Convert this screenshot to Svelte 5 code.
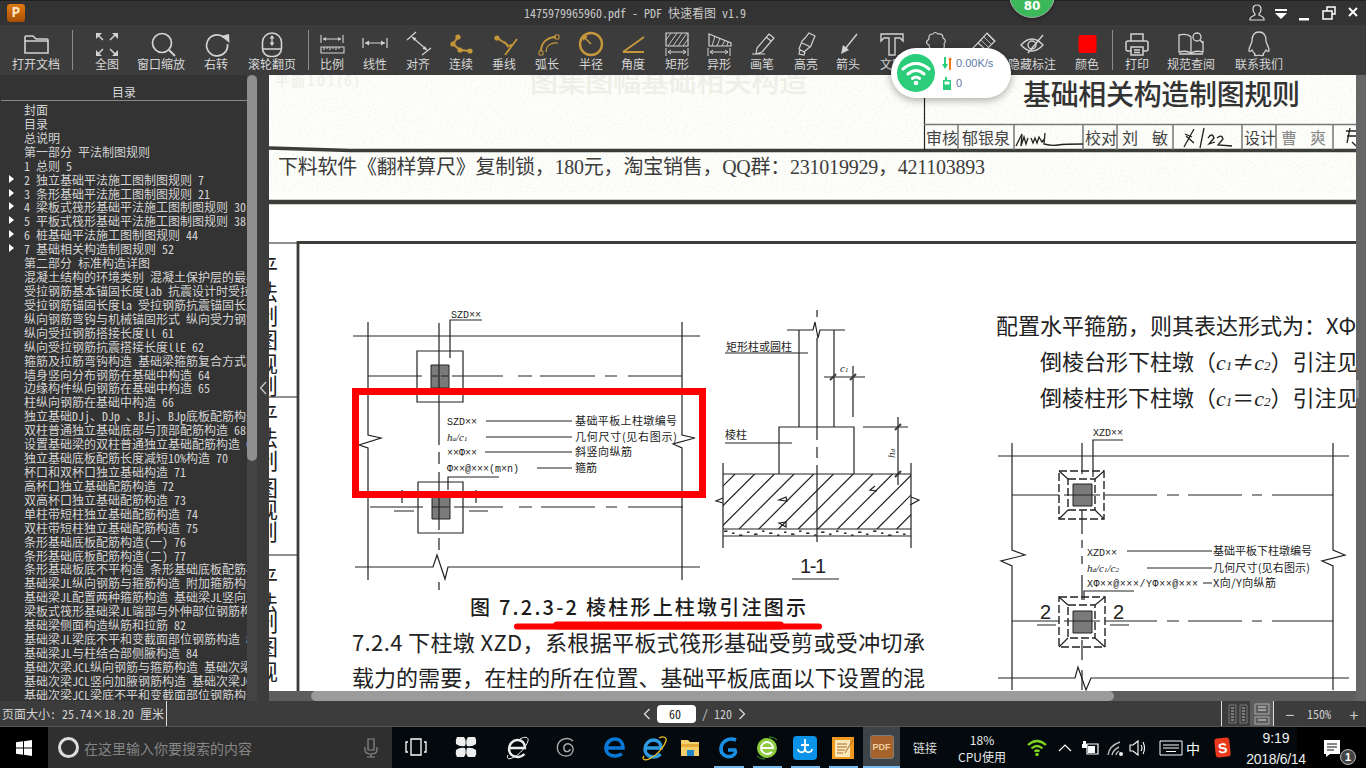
<script>
  const S = (d, sw = 1.4, stroke = 'currentColor') => ({ d, fill: 'none', stroke, sw });
  const F = (d, fill = 'currentColor') => ({ d, fill, stroke: 'none', sw: 0 });
  const dot = (x, y, r) => `M${x - r} ${y}a${r} ${r} 0 1 0 ${2 * r} 0a${r} ${r} 0 1 0 ${-2 * r} 0z`;
  const place = (items, start = 0) => {
    let end = start;
    return items.map((it) => {
      const w = it.w ?? 36;
      const ml = it.c - w / 2 - end;
      end = it.c + w / 2;
      return { ...it, w, ml };
    });
  };

  const dim = 'M7 18v8M29 18v8M9 22h18M12 20l-3 2 3 2M24 20l3 2-3 2';
  const tools = place([
    { c: 36, w: 48, t: '打开文档', i: [S('M7 23V7q0-1 1-1h7l3 3h11q1 0 1 1v13zM7 11h23', 1.6)] },
    { c: 72.5, w: 1, sep: 1 },
    { c: 107, t: '全图', i: [S('M9 5l5 5M21 10l5-5M9 24l5-5M26 24l-5-5', 1.5), F('M7 3h6l-6 6zM29 3h-6l6 6zM7 26h6l-6-6zM29 26h-6l6-6z')] },
    { c: 161, w: 48, t: '窗口缩放', i: [S(dot(19, 13, 9.5), 1.7), S('M26 20l6 6', 2)] },
    { c: 216, t: '右转', i: [S('M26 7.500A10.500 10.500 0 1 0 29.500 14', 1.7), F('M23 6l8-2 .5 9z')] },
    { c: 272, w: 48, t: '滚轮翻页', i: [S('M8.500 12.500a9.500 9.500 0 0 1 19 0v6a8 8 0 0 1-8 8h-3a8 8 0 0 1-8-8zM8.500 19h19', 1.6), S('M18 6v9', 1.4), F('M15.500 8.500L18 5l2.500 3.500zM15.500 12.500L18 16l2.500-3.500z')] },
    { c: 308.5, w: 1, sep: 1 },
    { c: 332, t: '比例', i: [S('M7 5v8M29 5v8M9 9h18M7 17h23v6H7zM10 17v3M13 17v2M16 17v3M19 17v2M22 17v3M25 17v2', 1.1), F('M9 9l3-2v4zM27 9l-3-2v4z')] },
    { c: 375, t: '线性', i: [S('M6 8v10M30 8v10M8 13h20', 1.2), F('M8 13l4-2.500v5zM28 13l-4-2.500v5z')] },
    { c: 418, t: '对齐', i: [S('M7 10l9-8M22 25l9-7M12 7l15 13', 1.2), F('M12 7l4.500 1-2.500 3zM27 20l-4.500-1 2.500-3z')] },
    { c: 461, t: '连续', gold: 1, i: [S('M15 7L10 14l7 6 10 1', 2), F(dot(15, 7, 2.6)), F(dot(10, 14, 2.6)), F(dot(17, 20, 2.6)), F(dot(27, 21, 2.6))] },
    { c: 504, t: '垂线', gold: 1, i: [S('M11 8l11 7M31 9L19 25M18.500 11.500l3.500 5 4-2', 1.8), F(dot(11, 8, 2.6))] },
    { c: 547, t: '弧长', gold: 1, i: [S('M12 21C12 12 19 7 27 7', 1.8), S('M17 22C17 16 22 12 29 13', 1.2), S('M10 21h4v4h-4zM26 5h4v4h-4z', 1)] },
    { c: 591, t: '半径', gold: 1, i: [S(dot(18, 14, 11), 2.4), S('M18 14l-6-6', 1.6), F('M9 5l6 1-5 5z')] },
    { c: 633, t: '角度', gold: 1, i: [S('M8 22h21M8 22L29 7', 1.9)] },
    { c: 677, t: '矩形', i: [S('M7 3h22v13H7z', 1.2), S('M9 16l9-13M14 16l9-13M19 16l9-13M24 16l5-7M7 10l5-7', .9), S(dim, 1)] },
    { c: 719, t: '异形', i: [S('M8 4l22 9v3H8z', 1.2), S('M11 16l3-10M16 16l3-8M21 16l3-6M26 16l1-4', .9), S(dim, 1)] },
    { c: 762, t: '画笔', i: [S('M25 4l5 4-12 14-6 2 1-6zM8 24h13M22 7l5 4', 1.2)] },
    { c: 806, t: '高亮', i: [S('M21 3l6 3-3 7-1 3-7 6-5-3 3-8 3-3zM14 13l9 4M12 19l-1 5 5 1 1-3', 1.2)] },
    { c: 848, t: '箭头', i: [S('M27 4L15 19', 1.4), F('M11 24l2-9 6 5z')] },
    { c: 892, t: '文字', i: [S('M7 4h22v7l-3-3h-5v17h-6V8h-5l-3 3z', 1.4)] },
    { c: 935, t: '云线', i: [S('M12 9q-1-5 4-5q2-3 5 0q5-1 5 4q4 2 1 6q2 5-4 5q-3 3-6 0q-5 1-5-4q-5-2 0-6z', 1.2)] },
    { c: 978, t: '橡皮', i: [S('M18 13L27 3l8 8-9 9zM18 13L7 24l6 5 13-9', 1.2), S('M21 10l8 8M24 7l8 8M27 4l7 7', .8)] },
    { c: 1032, w: 48, t: '隐藏标注', i: [S('M7 15q11-12 22 0q-11 12-22 0z', 1.4), S(dot(18, 15, 4), 1.4), S('M29 5L14 23', 1.4)] },
    { c: 1087, t: '颜色', i: [F('M11.500 5h14a2 2 0 0 1 2 2v14a2 2 0 0 1-2 2h-14a2 2 0 0 1-2-2V7a2 2 0 0 1 2-2z', '#f00')] },
    { c: 1112.5, w: 1, sep: 1 },
    { c: 1137, t: '打印', i: [S('M12 11V4h12v7M12 21H9a2 2 0 0 1-2-2v-6a2 2 0 0 1 2-2h18a2 2 0 0 1 2 2v6a2 2 0 0 1-2 2h-3M12 17h12v8H12zM15 20h6M15 22.500h6', 1.5)] },
    { c: 1191, w: 48, t: '规范查阅', i: [S('M18 7c-3-3-8-3-12-2v17c4-1 9-1 12 1 3-2 8-2 12-1V11M18 7v16M6 24h24', 1.3), S(dot(24, 7, 4), 1.3), S('M27 10l3 3', 1.5)] },
    { c: 1259, w: 48, t: '联系我们', i: [S('M18 2c-6 0-7 5-7 9 0 2-3 6-3 9 0 3 2 1 3 0 1 2 2 3 3 4-2 2 2 2 4 1 2 1 6 1 4-1 1-1 2-2 3-4 1 1 3 3 3 0 0-3-3-7-3-9 0-4-1-9-7-9z', 1.3)] }
  ]);

  const titleIcons = place([
    { c: 1257, w: 18, i: [S('M9 2c-3 0-4 2-4 4s1 4 2 5v1c-2 1-5 2-5 4v1h14v-1c0-2-3-3-5-4v-1c1-1 2-3 2-5s-1-4-4-4z', 1.2)] },
    { c: 1281, w: 18, i: [F('M3 6h12v2H3zM3 10h12l-6 6z', '#fff')] },
    { c: 1304, w: 18, i: [F('M4 15h10v2.500H4z', '#fff')] },
    { c: 1329, w: 18, i: [S('M7 8V4h8v7h-3M3 8h9v8H3z', 1.5, '#fff')] },
    { c: 1353, w: 18, i: [S('M5 5l8 8M13 5l-8 8', 1.8, '#fff')] }
  ], 746);

  const tree = [
    '封面', '目录', '总说明', '第一部分 平法制图规则', '1 总则 5',
    '>2 独立基础平法施工图制图规则 7', '>3 条形基础平法施工图制图规则 21',
    '>4 梁板式筏形基础平法施工图制图规则 30', '>5 平板式筏形基础平法施工图制图规则 38',
    '>6 桩基础平法施工图制图规则 44', '>7 基础相关构造制图规则 52', '第二部分 标准构造详图',
    '混凝土结构的环境类别 混凝土保护层的最小厚度 58', '受拉钢筋基本锚固长度lab 抗震设计时受拉钢筋基本锚固长度',
    '受拉钢筋锚固长度ｌａ 受拉钢筋抗震锚固长度ｌａＥ', '纵向钢筋弯钩与机械锚固形式 纵向受力钢筋 60',
    '纵向受拉钢筋搭接长度ｌｌ 61', '纵向受拉钢筋抗震搭接长度ｌｌE 62', '箍筋及拉筋弯钩构造 基础梁箍筋复合方式 63',
    '墙身竖向分布钢筋在基础中构造 64', '边缘构件纵向钢筋在基础中构造 65', '柱纵向钢筋在基础中构造 66',
    '独立基础DJj、DJp 、BJj、BJp底板配筋构造 67', '双柱普通独立基础底部与顶部配筋构造 68',
    '设置基础梁的双柱普通独立基础配筋构造 69', '独立基础底板配筋长度减短10%构造 70', '杯口和双杯口独立基础构造 71',
    '高杯口独立基础配筋构造 72', '双高杯口独立基础配筋构造 73', '单柱带短柱独立基础配筋构造 74', '双柱带短柱独立基础配筋构造 75',
    '条形基础底板配筋构造(一) 76', '条形基础底板配筋构造(二) 77', '条形基础板底不平构造 条形基础底板配筋构造 78',
    '基础梁JL纵向钢筋与箍筋构造 附加箍筋构造 79', '基础梁JL配置两种箍筋构造 基础梁JL竖向加腋 80',
    '梁板式筏形基础梁JL端部与外伸部位钢筋构造 81', '基础梁侧面构造纵筋和拉筋 82', '基础梁JL梁底不平和变截面部位钢筋构造 83',
    '基础梁JL与柱结合部侧腋构造 84', '基础次梁JCL纵向钢筋与箍筋构造 基础次梁端部 85', '基础次梁JCL竖向加腋钢筋构造 基础次梁JCL 86',
    '基础次梁JCL梁底不平和变截面部位钢筋构造 87'
  ].map((t) => (t[0] === '>' ? { t: t.slice(1), open: 1 } : { t }));

  const strip = [
    ['平', 267], ['法', 292], ['制', 316], ['图', 340], ['规', 364], ['则', 386],
    ['平', 415], ['法', 438], ['制', 461], ['图', 488], ['规', 510], ['则', 532],
    ['平', 578], ['法', 603], ['制', 623], ['图', 647], ['规', 672]
  ];
  const hatch = Array.from({ length: 13 }, (_, i) => 735 + i * 19.7);
  const specks = Array.from({ length: 60 }, (_, i) => [724 + ((i * 67) % 186), 530.500 + ((i * 13) % 5)]);
  const axisDash = (y, a = 454) => [[a, 503], [519, 532], [541, 595], [606, 617], [628, 683]].map(([p, q]) => `M${p} ${y}H${q}`).join('');
  const axisDashR = (y) => [[1105, 1157], [1167, 1179], [1188, 1242], [1252, 1262], [1272, 1333]].map(([p, q]) => `M${p} ${y}H${q}`).join('');

  const task = place([
    { c: 416, w: 24, i: [S('M7 4h10v16H7zM4 7H2v10h2M20 7h2v10h-2', 1.3, '#fff')] },
    { c: 466, w: 24, i: [F('M3 2h7q3 4 1 9-5 1-9-2-1-4 1-7zM21 2h-7q-3 4-1 9 5 1 9-2 1-4-1-7zM3 22h7q3-4 1-9-5-1-9 2-1 4 1 7zM21 22h-7q-3-4-1-9 5-1 9 2 1 4-1 7z', '#eee')] },
    { c: 518, w: 26, i: [S('M5 13h15c0-5-3-8-7.500-8S4 9 4 14s4 8 8.500 8c3 0 5-1 7-3', 2.4, '#eee'), S('M3 20C1 24 4 25 9 22c6-3 12-10 14-16 1-4-3-5-8-2', 1, '#eee')] },
    { c: 566, w: 24, i: [S('M19 6c-4-4-12-3-15 3-2 6 1 12 8 12s9-8 5-11-8 0-7 4 6 3 6 0', 1.4, '#aaa')] },
    { c: 615, w: 24, i: [S('M4 13h16c0-5-3-9-8-9S3 8 3 13s4 8 9 8c3 0 5-1 7-2', 3.600, '#0a78d7')] },
    { c: 654, w: 28, i: [S('M6 13h15c0-5-3-8-7.500-8S5 9 5 14s4 8 8.500 8c3 0 5-1 7-3', 3.400, '#2f9be0'), S('M4 21c-3 4 2 5 7 2 6-3 13-11 15-17 1-4-3-5-7-3', 1.3, '#f2c11c')] },
    { c: 690, w: 22, i: [F('M2 5h7l2 2h9v14H2z', '#f5cf6b'), F('M2 9h18v3H2z', '#e4ad3a'), F('M8 15h7v6H8z', '#1f87c9')] },
    { c: 729, w: 26, i: [S('M20 5C12 2 5 7 5 14c0 6 6 9 11 7 3-1 4-4 3-6h-7', 3.600, '#1a8fe6')] },
    { c: 767, w: 26, i: [F(dot(13, 13, 10), '#8bcb3d'), S('M7 13h12c0-3-3-6-6-6s-6 3-6 6 3 6 6 6c2 0 4-1 5-2', 1.8, '#fff'), S('M3 21c3 3 7 3 8 3M15 2c3 0 6 1 8 3', 1, '#3d9d2e')] },
    { c: 805, w: 26, i: [F('M5 1h16a4 4 0 0 1 4 4v16a4 4 0 0 1-4 4H5a4 4 0 0 1-4-4V5a4 4 0 0 1 4-4z', '#0a93e8'), S('M13 4v9c0 6-7 5-7 1M13 13c0 6 7 5 7 1M9 10h8', 1.800, '#fff')] },
    { c: 843, w: 26, i: [F('M2 2h22v22H2z', '#f29a1f'), F('M5 5h15v17H5z', '#fbe9bb'), S('M7 9h10M7 12h10M7 15h8M7 18h6M15 18l8-13', 1, '#a8682a')] }
  ], 392);

  const tray = place([
    { c: 1037, w: 22, i: [S('M2 9q9-8 18 0M5.500 12.500q5.500-5 11 0M8.500 15.500q2.500-2 5 0', 2.2, '#7ed321'), F(dot(11, 18.500, 1.8), '#7ed321')] },
    { c: 1065, w: 16, i: [S('M2 15l6-6 6 6', 1.2, '#fff')] },
    { c: 1090, w: 20, i: [S('M7 8h11v10H7z', 1.2, '#fff'), F('M8 10h7v7H8zM3 5v3h3V5zM2 8h5v4H2z', '#fff')] },
    { c: 1115, w: 20, i: [S('M3 19q1-9 12-13M7 19q1-5 7-8M11 19q0-2 3-4', 1.4, '#bbb'), F(dot(16, 18, 2), '#eee')] },
    { c: 1137, w: 18, i: [S('M2 9h3l5-4v14l-5-4H2zM13 9q2 3 0 6M15 6q3 6 0 12', 1.1, '#fff')] },
    { c: 1171, w: 24, i: [S('M1 5h22v14H1z', 1, '#fff'), S('M4 9h16M4 12h16M7 15.500h10', 1.2, '#fff')] }
  ], 1014);
</script>

<div class="root">
  <div class="titlebar">
    <div class="logo"><span>P</span></div>
    <div class="title mono">1475979965960.pdf - PDF 快速看图 v1.9</div>
    {#each titleIcons as it}
      <svg class="ticon" style="margin-left:{it.ml}px" width="18" height="20" viewBox="0 0 18 20">
        {#each it.i as p}<path d={p.d} fill={p.fill} stroke={p.stroke} stroke-width={p.sw} />{/each}
      </svg>
    {/each}
  </div>

  <div class="toolbar">
    {#each tools as it}
      {#if it.sep}
        <div class="sep" style="margin-left:{it.ml}px"></div>
      {:else}
        <div class="tool" class:gold={it.gold} style="margin-left:{it.ml}px;width:{it.w}px">
          <svg width="36" height="28" viewBox="0 0 36 28">
            {#each it.i as p}<path d={p.d} fill={p.fill} stroke={p.stroke} stroke-width={p.sw} />{/each}
          </svg>
          <span>{it.t}</span>
        </div>
      {/if}
    {/each}
  </div>

  <div class="main">
    <div class="side">
      <div class="sidehead">目录</div>
      <div class="rows mono">
        {#each tree as r}
          <div class="row" class:open={r.open}>{r.t}</div>
        {/each}
      </div>
    </div>
    <div class="vbar"><div class="vthumb"></div></div>
    <div class="handle">
      <svg width="8" height="14" viewBox="0 0 8 14"><path d="M7 1L1.500 7 7 13" fill="none" stroke="#ccc" stroke-width="1.300" /></svg>
    </div>
    <div class="docwrap">
      <svg class="doc" width="1087" height="616" viewBox="269 75 1087 616">
        <defs>
          <filter id="paper" x="0" y="0" width="100%" height="100%">
            <feTurbulence type="fractalNoise" baseFrequency="0.7" numOctaves="3" seed="4" />
            <feColorMatrix type="matrix" values="0 0 0 0 .72  0 0 0 0 .78  0 0 0 0 .68  1.900 0 0 0 -.92" />
          </filter>
          <clipPath id="slab"><rect x="723" y="474" width="188" height="55" /></clipPath>
        </defs>
        <rect x="269" y="75" width="1087" height="616" fill="#fff" />
        <rect x="269" y="75" width="1087" height="125" fill="#fefefb" />
        <rect x="269" y="75" width="1087" height="118" filter="url(#paper)" opacity=".6" />

        <text class="ghost" x="530" y="92" textLength="277" lengthAdjust="spacing">图集图幅基础相关构造</text>
        <text class="ghost small" x="275" y="86" textLength="84" lengthAdjust="spacing">平面101(6)</text>

        <path class="thick" d="M269 148L350 150.500H1356" stroke-width="3.500" />
        <path class="thick" d="M269 202H1356" stroke-width="4.500" />
        <path class="ln" d="M924.500 75V150" stroke-width="2" />
        <path class="ln gray" d="M924 124.500H1356M958 125V150M1014 125V150M1083 125V150M1117 125V150M1173 125V150M1242 125V150M1276 125V150M1333 125V150" />

        <text class="head" x="1023" y="105" textLength="277" lengthAdjust="spacing">基础相关构造制图规则</text>
        <text class="cell" x="926" y="144">审核</text>
        <text class="cell" x="962" y="144">郁银泉</text>
        <path class="sig" d="M1016 146l6-12-1 12 3-9 2 7 2-6M1031 138l2 5 2-5 2 5 2-6 3 5 3-4M1045 133l-1 11q8 2 14 1t25-1" />
        <text class="cell" x="1085" y="144">校对</text>
        <text class="cell" x="1122" y="144">刘</text>
        <text class="cell" x="1152" y="144">敏</text>
        <path class="sig" d="M1185 134l7 3M1194 129l-10 18M1186 136l8 7M1204 128l-4 20M1208 138q4-6 6 0l-5 6 6-2M1217 138q5-4 6 1l-5 6 14 1" stroke-width="1.500" />
        <text class="cell" x="1244" y="144">设计</text>
        <text class="cell faint" x="1281" y="144">曹</text>
        <text class="cell faint" x="1310" y="144">爽</text>
        <path class="sig" d="M1346 131h10M1347 136h9M1350 128l-3 15M1352 142l4 4" />

        <text class="note" x="278" y="174" textLength="707" lengthAdjust="spacing">下料软件《翻样算尺》复制锁，180元，淘宝销售，QQ群：231019929，421103893</text>

        <!-- page frame -->
        <path class="thick" d="M298 242.500H1356M298 241V691" stroke-width="2.800" />
        <path class="ln" d="M269 243H297M269 397H297M269 555H297" />
        {#each strip as [ch, y]}
          <text class="stripc" x="256" y={y + 8}>{ch}</text>
        {/each}

        <!-- left figure -->
        <path class="ln" d="M353 336H700M368 322V435l13 3-22 7 9 3V580M682 322V435l13 3-22 6 9 4V580" />
        <path class="ln" d="M417 351h46v51h-46zM418 482h45v51h-45z" />
        <path class="fillc" d="M431 365h18v23h-18zM432 496h18v23h-18z" />
        <path class="ln" d="M439 323V400M439 400V445" />
        <path class="ln" d="M439 452v12M439 472V530" />
        <path class="ln" d="M439 538v12M439 582v8M431 376h7M441 376h7M432 507h17" />
        <path class="ln" d="M482 320H450V358M448 490V477H499" />
        <path class="ln" d="M368 376H422M452 376H503M518 376H532M540 376H595M605 376H617M628 376H682M370 507H423" />
        <path class="ln" d={axisDash(507)} />
        <path class="ln" d="M402 490V503M476 490V503" />
        <path class="ln" d="M394 511h20M469 511h19" stroke-width="2.500" />
        <path class="ln" d="M355 567H433L437 555 445 579 448 567H700" />
        <text class="fig" x="451" y="318">SZD××</text>
        <text class="fig" x="447" y="425">SZD××</text>
        <text class="fig ital" x="447" y="441">h<tspan class="sub">a</tspan>/c<tspan class="sub">1</tspan></text>
        <text class="fig" x="447" y="456">××Φ××</text>
        <text class="fig" x="447" y="472">Φ××@×××(m×n)</text>
        <path class="ln" d="M486 421H572M486 437H572M485 452H572M537 468H572" />
        <text class="fig cn" x="575" y="425" textLength="102">基础平板上柱墩编号</text>
        <text class="fig cn" x="575" y="441" textLength="102">几何尺寸(见右图示)</text>
        <text class="fig cn" x="575" y="456" textLength="57">斜竖向纵筋</text>
        <text class="fig cn" x="575" y="472" textLength="22">箍筋</text>

        <!-- red mark-up -->
        <rect class="redbox" x="355.500" y="391.500" width="347" height="103" />
        <path class="redline" d="M517 626.500H819" stroke-width="6" />
        <path class="redline" d="M557 625.500H780" stroke-width="8" />

        <text class="cap" x="470" y="615" textLength="336" lengthAdjust="spacing">图 7.2.3-2 棱柱形上柱墩引注图示</text>
        <text class="para" x="352" y="651" textLength="573" lengthAdjust="spacing">7.2.4 下柱墩 XZD，系根据平板式筏形基础受剪或受冲切承</text>
        <text class="para" x="352" y="686" textLength="573" lengthAdjust="spacing">载力的需要，在柱的所在位置、基础平板底面以下设置的混</text>

        <!-- middle figure -->
        <path class="ln" d="M817 310v7M787 330H813L815 322 818 338 820 330H845M817 338V440M817 447V458M817 465V542" />
        <path class="ln" d="M799 330V427M834 330V427M779 474V427H854V474M725 353H808M725 443H792" />
        <path class="ln" d="M824 377H865M853 366V417M863 427H908M898 417V485" />
        <path class="thick" d="M830 380l6-6M850 380l6-6M895 430l6-6M895 477l6-6" stroke-width="2" />
        <text class="fig cn" x="726" y="351" textLength="66">矩形柱或圆柱</text>
        <text class="fig cn" x="725" y="439" textLength="22">棱柱</text>
        <text class="fig ital" x="840" y="372">c<tspan class="sub">1</tspan></text>
        <text class="fig ital" x="895" y="458" transform="rotate(-90 895 458)">h<tspan class="sub">d</tspan></text>
        <path class="ln" d="M723 474H911M723 529H911M723 536H911M723 463V548M911 463V548" />
        <g clip-path="url(#slab)">
          {#each hatch as x}
            <path class="ln" d="M{x} 474L{x - 55} 529" />
          {/each}
        </g>
        {#each specks as [x, y]}
          <rect x={x} y={y} width="1.500" height="1.500" fill="#333" />
        {/each}
        <path class="ln" d="M786 497l-7 3 8 1zM875 486l-5 4 7 1M786 522l-7 1 7 4z" />
        <path class="ln" d="M723 498l-7 3 7 2M911 497l8 3-9 5" />
        <text class="one" x="800" y="573" textLength="26" lengthAdjust="spacing">1-1</text>
        <path class="ln" d="M792 579H839" stroke-width="3" />

        <!-- right column -->
        <text class="para" x="996" y="334">配置水平箍筋，则其表达形式为：XΦ×</text>
        <text class="para" x="1040" y="370">倒棱台形下柱墩（<tspan class="pi">c</tspan><tspan class="psub">1</tspan>≠<tspan class="pi">c</tspan><tspan class="psub">2</tspan>）引注见</text>
        <text class="para" x="1040" y="406">倒棱柱形下柱墩（<tspan class="pi">c</tspan><tspan class="psub">1</tspan>＝<tspan class="pi">c</tspan><tspan class="psub">2</tspan>）引注见</text>
        <path class="ln" d="M998 456H1349M1012 443V550l13 5-24 6 11 5V690M1333 443V550l12 5-23 6 11 5V690" />
        <path class="ln" d="M1082 443V474M1082 510V534M1082 540v8M1082 556v8M1082 575V600M1082 640V660M1082 670V690" />
        <path class="ln" d="M1123 440H1093V477M1084 600V591H1134" />
        <path class="ln dash" d="M1059 471h45v48h-45zM1068 479h27v31h-27zM1059 597h46v50h-46zM1068 605h27v33h-27z" />
        <path class="ln" d="M1059 471l9 8M1104 471l-9 8M1059 519l9-9M1104 519l-9-9M1059 597l9 8M1105 597l-10 8M1059 647l9-9M1105 647l-10-9" />
        <path class="fillc" d="M1073 484h19v22h-19zM1073 611h19v22h-19z" />
        <path class="ln" d="M1012 495H1059M1064 495H1100M1012 621H1059M1064 621H1100" />
        <path class="ln" d={axisDashR(495)} />
        <path class="ln" d={axisDashR(621)} />
        <path class="ln" d="M998 678H1075L1078 667 1086 690 1091 678H1349" />
        <path class="ln" d="M1037 625h19M1110 625h19" stroke-width="2.500" />
        <text class="two" x="1040" y="619">2</text>
        <text class="two" x="1113" y="619">2</text>
        <text class="fig" x="1093" y="436">XZD××</text>
        <text class="fig" x="1087" y="556">XZD××</text>
        <text class="fig ital" x="1087" y="572">h<tspan class="sub">d</tspan>/c<tspan class="sub">1</tspan>/c<tspan class="sub">2</tspan></text>
        <text class="fig" x="1087" y="587" textLength="111" lengthAdjust="spacing">XΦ××@×××/YΦ××@×××</text>
        <path class="ln" d="M1127 551H1212M1147 568H1212M1203 583H1212" />
        <text class="fig cn" x="1213" y="555" textLength="99">基础平板下柱墩编号</text>
        <text class="fig cn" x="1213" y="572" textLength="97">几何尺寸(见右图示)</text>
        <text class="fig cn" x="1213" y="587" textLength="63">X向/Y向纵筋</text>
      </svg>
      <div class="hbar"><div class="hthumb"></div></div>
    </div>
    <div class="rbar"><div class="rtick"></div></div>
  </div>

  <div class="status">
    <div class="sleft mono">页面大小: 25.74×18.20 厘米</div>
    <svg class="chev first" width="8" height="12" viewBox="0 0 8 12"><path d="M6.500 1L1.500 6l5 5" /></svg>
    <div class="pageinput mono">60</div>
    <div class="pagecount mono">/ 120</div>
    <svg class="chev" width="8" height="12" viewBox="0 0 8 12"><path d="M1.500 1l5 5-5 5" /></svg>
    <div class="sright">
      <svg width="22" height="22" viewBox="0 0 22 22">
        <path d="M1 2h7v18H1zM12 2h7v18h-7z" fill="none" stroke="#777" />
        <path d="M3 5h3M3 8h3M3 11h3M3 14h3M3 17h3M14 5h3M14 8h3M14 11h3M14 14h3M14 17h3" stroke="#bbb" />
      </svg>
      <div class="viewbtn">
        <svg width="22" height="24" viewBox="0 0 22 24">
          <path d="M4 2h14v10H4zM4 15h14v7H4z" fill="#5d5d5d" stroke="#aaa" />
          <path d="M7 5h8M7 8h8M7 18h8" stroke="#ddd" />
        </svg>
      </div>
      <span class="zm first">−</span>
      <span class="zmv mono">150%</span>
      <span class="zm">+</span>
    </div>
  </div>

  <div class="taskbar">
    <div class="start">
      <svg width="16" height="16" viewBox="0 0 16 16"><path d="M0 2.300L7 1.300V7.500H0zM8 1.200L16 0V7.500H8zM0 8.500H7V14.700L0 13.700zM8 8.500H16V16L8 14.800z" fill="#fff" /></svg>
    </div>
    <div class="search">
      <div class="cortana"></div>
      <span class="ph">在这里输入你要搜索的内容</span>
      <svg class="mic" width="14" height="20" viewBox="0 0 14 20"><path d="M4 1h6v11H4zM1 9v3q0 4 6 4t6-4V9M7 16v3M3 19h8" fill="none" stroke="#8a8a8a" stroke-width="1.200" /></svg>
    </div>
    <div class="apps">
      {#each task as it}
        <svg style="margin-left:{it.ml}px" width={it.w} height="26" viewBox="0 0 {it.w} 26">
          {#each it.i as p}<path d={p.d} fill={p.fill} stroke={p.stroke} stroke-width={p.sw} />{/each}
        </svg>
      {/each}
      <div class="pdfslot"><div class="pdfapp">PDF</div></div>
      <div class="under u1"></div><div class="under u2"></div><div class="under u3"></div><div class="under u4"></div>
    </div>
    <div class="netlabel">链接</div>
    <div class="cpu"><span>18%</span><span>CPU使用</span></div>
    <div class="tray">
      {#each tray as it}
        <svg style="margin-left:{it.ml}px" width={it.w} height="24" viewBox="0 0 {it.w} 24">
          {#each it.i as p}<path d={p.d} fill={p.fill} stroke={p.stroke} stroke-width={p.sw} />{/each}
        </svg>
      {/each}
      <span class="zh">中</span>
      <div class="sogou">S</div>
    </div>
    <div class="notify">
      <svg width="20" height="20" viewBox="0 0 20 20"><path d="M2 2h16v14H8l-4 3v-3H2z" fill="#fff" /><path d="M5 6h10M5 9h10M5 12h7" stroke="#111" /></svg>
      <div class="nbadge">1</div>
    </div>
    <div class="clock"><span class="time">9:19</span><span class="date">2018/6/14</span></div>
  </div>

  <div class="badge"><span>80</span></div>

  <div class="widget">
    <div class="wcircle">
      <svg width="30" height="26" viewBox="0 0 30 26">
        <path d="M2 9q13-11 26 0M7 14q8-7 16 0M11.500 18.500q3.500-3 7 0" fill="none" stroke="#fff" stroke-width="3" stroke-linecap="round" />
        <circle cx="15" cy="23" r="2.300" fill="#fff" />
      </svg>
    </div>
    <div class="winfo">
      <div class="wline">
        <svg width="10" height="13" viewBox="0 0 10 13"><path d="M3 0v9" stroke="#2bcd7a" stroke-width="2" /><path d="M0 7l3 5 3-5z" fill="#2bcd7a" /><path d="M8 13V3" stroke="#f07a1a" stroke-width="2" /><path d="M6 3l2-3 2 3z" fill="#f07a1a" /></svg>
        <span>0.00K/s</span>
      </div>
      <div class="wline">
        <svg width="10" height="13" viewBox="0 0 10 13"><path d="M1 3h2V0h2v3h4v10H1z" fill="#2bcd7a" /><path d="M2.500 4.500h5v3h-5z" fill="#fff" /></svg>
        <span>0</span>
      </div>
    </div>
  </div>
</div>

<style>
  :global(body) { margin: 0; background: #333; }
  .root { position: relative; width: 1366px; height: 768px; overflow: hidden; display: flex; flex-direction: column; font-family: "Noto Sans CJK SC", sans-serif; color: #d8d8d8; }
  .mono { font-family: "Noto Sans CJK SC", monospace; font-feature-settings: "hwid"; }

  .titlebar { height: 25px; box-sizing: border-box; background: #333; border-top: 1px solid #222; display: flex; align-items: center; flex: none; }
  .logo { width: 18px; height: 18px; margin-left: 7px; border-radius: 3px; background: linear-gradient(#e07a12, #a84f06); color: #ffe6c6; display: flex; align-items: center; justify-content: center; font: bold 14px "Liberation Mono", monospace; }
  .title { margin-left: 499px; width: 222px; font-size: 12px; line-height: 14px; color: #c8c8c8; white-space: nowrap; }
  .ticon { flex: none; color: #ddd; }

  .toolbar { height: 50px; background: #3c3c3c; display: flex; flex: none; }
  .sep { width: 1px; height: 40px; margin-top: 5px; background: #8c8c8c; flex: none; }
  .tool { flex: none; display: flex; flex-direction: column; align-items: center; padding-top: 5px; color: #d2d2d2; }
  .tool.gold { color: #c4973b; }
  .tool svg { height: 28px; flex: none; }
  .tool span { display: block; font-size: 12px; line-height: 14px; margin-top: -1px; color: #d6d6d6; white-space: nowrap; }

  .main { height: 626px; display: flex; flex: none; background: #3c3c3c; }
  .side { width: 247px; background: #333; flex: none; overflow: hidden; }
  .sidehead { height: 26px; box-sizing: border-box; border-bottom: 1px solid #8a8a8a; text-align: center; font-size: 12px; line-height: 34px; margin-left: 1px; color: #d8d8d8; }
  .rows { padding-top: 2px; height: 597px; overflow: hidden; }
  .row { position: relative; padding-left: 24px; font-size: 12px; line-height: 13.93px; height: 13.93px; white-space: nowrap; color: #d4d4d4; }
  .row.open::before { content: ""; position: absolute; left: 9px; top: 2px; width: 0; height: 0; border-left: 5px solid #fff; border-top: 4.500px solid transparent; border-bottom: 4.500px solid transparent; }
  .vbar { width: 10px; background: #444; flex: none; }
  .vthumb { height: 386px; background: #8f8f8f; border-radius: 5px; }
  .handle { width: 12px; flex: none; display: flex; align-items: center; justify-content: center; box-sizing: border-box; height: 626px; }
  .docwrap { width: 1087px; flex: none; }
  .doc { display: block; }
  .hbar { height: 10px; background: #5e5e5e; padding-left: 42px; }
  .hthumb { width: 803px; height: 10px; background: #9b9b9b; border-radius: 5px; }
  .rbar { width: 10px; background: #666; flex: none; padding-top: 305px; box-sizing: border-box; }
  .rtick { height: 18px; width: 3px; background: #8a8a8a; }

  .ln { fill: none; stroke: #222; stroke-width: 1.200; }
  .ln.gray { stroke: #777; stroke-width: 1.500; }
  .ln.dash { stroke-dasharray: 8 3; stroke-width: 1.400; }
  .thick { fill: none; stroke: #3a3d38; }
  .fillc { fill: #7a7a7a; stroke: #222; stroke-width: 1; }
  .sig { fill: none; stroke: #222; stroke-width: 1.300; }
  .ghost { font-size: 28px; fill: #edf0e6; font-weight: 500; }
  .ghost.small { font-size: 14px; fill: #eef0e8; }
  .head { font-size: 28px; fill: #333; font-weight: 500; }
  .cell { font-size: 16px; fill: #444; }
  .cell.faint { fill: #888; }
  .note { font-family: "Liberation Serif", "Noto Sans CJK SC", serif; font-size: 20px; fill: #3c3c3c; }
  .stripc { font-size: 22px; fill: #222; }
  .fig { font-family: "Liberation Mono", "Noto Sans CJK SC", monospace; font-size: 10px; fill: #222; }
  .fig.cn { font-family: "Noto Sans CJK SC", sans-serif; font-size: 11px; }
  .fig.ital { font-family: "Liberation Serif", serif; font-style: italic; font-size: 11px; }
  .sub { font-size: 7px; }
  .pi { font-family: "Liberation Serif", serif; font-style: italic; }
  .psub { font-family: "Liberation Serif", serif; font-style: italic; font-size: 13px; }
  .redbox { fill: none; stroke: #f00; stroke-width: 7; }
  .redline { fill: none; stroke: #f00; stroke-linecap: round; }
  .cap { font-family: "Noto Sans CJK SC", sans-serif; font-size: 20px; fill: #1c1c1c; font-weight: 500; }
  .para { font-family: "Noto Sans CJK SC", sans-serif; font-size: 22px; fill: #222; }
  .one { font-family: "Liberation Sans", sans-serif; font-size: 20px; fill: #222; }
  .two { font-family: "Liberation Sans", sans-serif; font-size: 20px; fill: #222; }

  .status { height: 26px; background: #3c3c3c; display: flex; align-items: center; flex: none; box-sizing: border-box; border-bottom: 1px solid #555; }
  .sleft { width: 164px; height: 25px; padding-left: 2px; border-right: 1px solid #ddd; font-size: 12px; line-height: 26px; white-space: nowrap; color: #d4d4d4; flex: none; }
  .chev { flex: none; margin-left: 6px; }
  .chev.first { margin-left: 476px; }
  .chev path { fill: none; stroke: #ddd; stroke-width: 1.300; }
  .pageinput { width: 39px; height: 18px; margin-left: 6px; background: #fff; border-radius: 4px; color: #222; font-size: 12px; line-height: 18px; padding-left: 12px; box-sizing: border-box; flex: none; }
  .pagecount { margin-left: 6px; width: 30px; font-size: 12px; color: #ccc; flex: none; white-space: nowrap; }
  .sright { margin-left: auto; width: 145px; height: 25px; border-left: 1px solid #ddd; box-sizing: border-box; display: flex; align-items: center; padding-left: 6px; flex: none; }
  .viewbtn { margin-left: 0; height: 25px; width: 23px; background: #5d5d5d; border-right: 1px solid #ddd; display: flex; align-items: center; justify-content: center; }
  .zm { font-size: 16px; color: #ccc; line-height: 20px; width: 12px; text-align: center; }
  .zm.first { margin-left: 10px; }
  .zmv { font-size: 12px; color: #ccc; width: 30px; margin-left: 11px; margin-right: 11px; white-space: nowrap; }

  .taskbar { height: 41px; background: #03090d; display: flex; flex: none; align-items: stretch; position: relative; }
  .start { width: 48px; background: #000; display: flex; align-items: center; justify-content: center; flex: none; }
  .search { width: 344px; background: #2f2f2f; display: flex; align-items: center; flex: none; box-sizing: border-box; padding-left: 10px; }
  .cortana { width: 15px; height: 15px; border: 3px solid #ddd; border-radius: 50%; flex: none; }
  .ph { margin-left: 5px; font-size: 14px; color: #858585; white-space: nowrap; }
  .mic { margin-left: 112px; flex: none; }
  .apps { width: 508px; display: flex; align-items: center; flex: none; position: relative; }
  .pdfslot { position: absolute; left: 471px; top: 0; width: 37px; height: 41px; background: #3c4448; border-bottom: 2px solid #76b9ed; box-sizing: border-box; display: flex; align-items: center; justify-content: center; }
  .pdfapp { width: 24px; height: 24px; background: #a5622a; border: 1px solid #7d7d7d; border-radius: 3px; font: bold 9px "Liberation Sans", sans-serif; color: #f0cfa0; display: flex; align-items: center; justify-content: center; box-sizing: border-box; }
  .under { position: absolute; bottom: 0; height: 2px; background: #76b9ed; }
  .u1 { left: 322px; width: 30px; } .u2 { left: 361px; width: 29px; } .u3 { left: 399px; width: 29px; } .u4 { left: 437px; width: 29px; }
  .netlabel { width: 50px; font-size: 12px; color: #ddd; line-height: 41px; text-align: center; flex: none; }
  .cpu { width: 64px; flex: none; display: flex; flex-direction: column; align-items: center; font-size: 12px; line-height: 17px; color: #e8e8e8; padding-top: 4px; box-sizing: border-box; }
  .tray { display: flex; align-items: center; flex: none; }
  .tray svg { flex: none; }
  .zh { margin-left: 3px; font-size: 14px; color: #fff; width: 14px; flex: none; }
  .sogou { margin-left: 15px; width: 15px; height: 19px; background: #e8391d; border-radius: 3px; color: #fff; font: bold 14px "Liberation Sans", sans-serif; display: flex; align-items: center; justify-content: center; transform: rotate(-6deg); flex: none; }
  .clock { position: absolute; left: 1236px; top: 0; width: 80px; display: flex; flex-direction: column; align-items: center; color: #eee; }
  .time { line-height: 18px; margin-top: 2px; font-family: "Liberation Sans", sans-serif; font-size: 14px; }
  .date { line-height: 18px; margin-top: 3px; font-family: "Liberation Sans", sans-serif; font-size: 14px; letter-spacing: -.3px; }
  .notify { position: absolute; left: 1297px; top: 0; width: 69px; height: 41px; background: #000; display: flex; align-items: center; justify-content: center; }
  .nbadge { position: absolute; left: 43px; top: 22px; width: 16px; height: 16px; border-radius: 50%; background: #444; border: 1px solid #bbb; color: #fff; font: bold 11px "Liberation Sans", sans-serif; display: flex; align-items: center; justify-content: center; box-sizing: border-box; }

  .badge { position: absolute; left: 1009px; top: -28px; width: 46px; height: 46px; border-radius: 50%; background: #3bb85a; border: 1px solid #aaa; box-sizing: border-box; display: flex; align-items: flex-end; justify-content: center; box-shadow: 0 1px 3px rgba(0,0,0,.5); }
  .badge span { color: #fff; font: bold 12px "DejaVu Sans", sans-serif; line-height: 16px; margin-bottom: 3px; }

  .widget { position: absolute; left: 891px; top: 48px; width: 120px; height: 50px; background: #fff; border-radius: 25px; box-shadow: 0 2px 8px rgba(0,0,0,.35); display: flex; align-items: center; box-sizing: border-box; padding-left: 6px; }
  .wcircle { width: 38px; height: 38px; border-radius: 50%; background: #2bcd7a; display: flex; align-items: center; justify-content: center; flex: none; }
  .winfo { margin-left: 7px; display: flex; flex-direction: column; gap: 7px; }
  .wline { display: flex; align-items: center; gap: 4px; height: 13px; font: 11px "Liberation Sans", sans-serif; color: #5c7aa6; }
</style>
